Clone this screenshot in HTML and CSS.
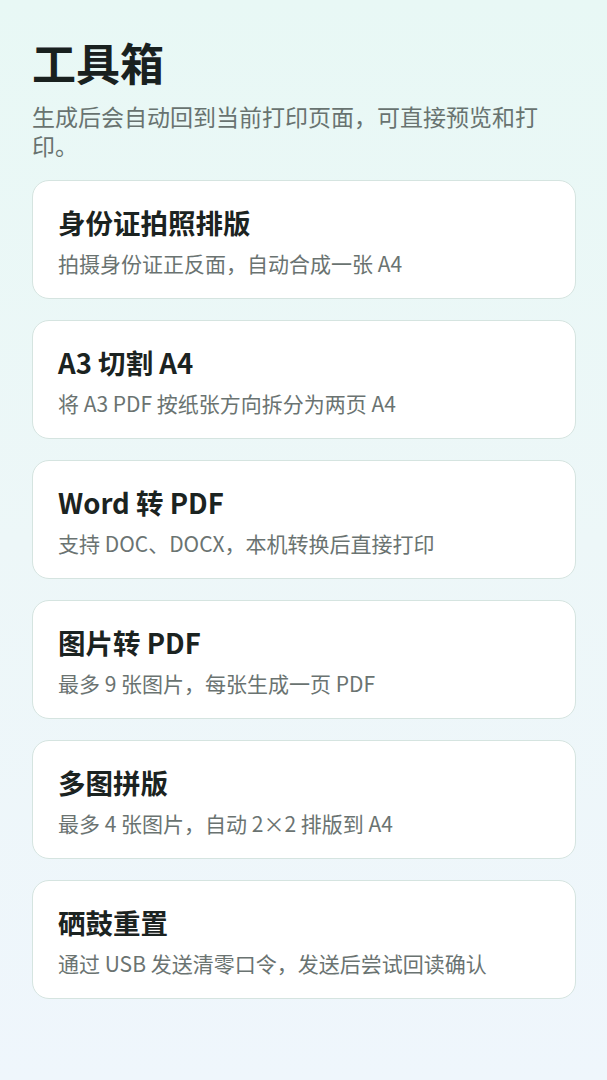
FILE: index.html
```html
<!DOCTYPE html>
<html lang="zh-CN">
<head>
<meta charset="utf-8">
<title>工具箱</title>
<link rel="stylesheet" href="styles.css">
</head>
<body>
<main class="page">
  <header class="header">
    <h1 class="page-title">工具箱</h1>
    <p class="page-desc">生成后会自动回到当前打印页面，可直接预览和打印。</p>
  </header>
  <section class="list">
    <div class="card">
      <div class="card-title">身份证拍照排版</div>
      <div class="card-desc">拍摄身份证正反面，自动合成一张 A4</div>
    </div>
    <div class="card">
      <div class="card-title">A3 切割 A4</div>
      <div class="card-desc">将 A3 PDF 按纸张方向拆分为两页 A4</div>
    </div>
    <div class="card">
      <div class="card-title">Word 转 PDF</div>
      <div class="card-desc">支持 DOC、DOCX，本机转换后直接打印</div>
    </div>
    <div class="card">
      <div class="card-title">图片转 PDF</div>
      <div class="card-desc">最多 9 张图片，每张生成一页 PDF</div>
    </div>
    <div class="card">
      <div class="card-title">多图拼版</div>
      <div class="card-desc">最多 4 张图片，自动 2×2 排版到 A4</div>
    </div>
    <div class="card">
      <div class="card-title">硒鼓重置</div>
      <div class="card-desc">通过 USB 发送清零口令，发送后尝试回读确认</div>
    </div>
  </section>
</main>
</body>
</html>
```

FILE: styles.css
```css
* { box-sizing: border-box; }
html, body {
  margin: 0;
  padding: 0;
  height: 100%;
}
body {
  font-family: "Noto Sans CJK SC", "Noto Sans", sans-serif;
  background: linear-gradient(180deg, #e8f8f5 0%, #edf7f8 50%, #eff6fc 100%);
  color: #1b2321;
  min-height: 1080px;
}
.page {
  padding: 34px 31px 0 32px;
}
.header {
  display: flex;
  flex-direction: column;
}
.page-title {
  margin: 0;
  font-size: 44px;
  line-height: 56px;
  font-weight: 700;
  color: #19211f;
}
.page-desc {
  margin: 12px 0 0 0;
  max-width: 520px;
  font-size: 23px;
  line-height: 29px;
  color: #687370;
}
.list {
  margin-top: 20px;
  display: flex;
  flex-direction: column;
  gap: 21px;
}
.card {
  background: #ffffff;
  border: 1px solid #d5e4e0;
  border-radius: 17px;
  padding: 23px 24px 21px 25px;
  display: flex;
  flex-direction: column;
  gap: 9px;
}
.card-title {
  font-size: 27.5px;
  line-height: 36px;
  font-weight: 700;
  color: #1b2321;
}
.card-desc {
  font-size: 21px;
  line-height: 28px;
  color: #6a7371;
}
```
